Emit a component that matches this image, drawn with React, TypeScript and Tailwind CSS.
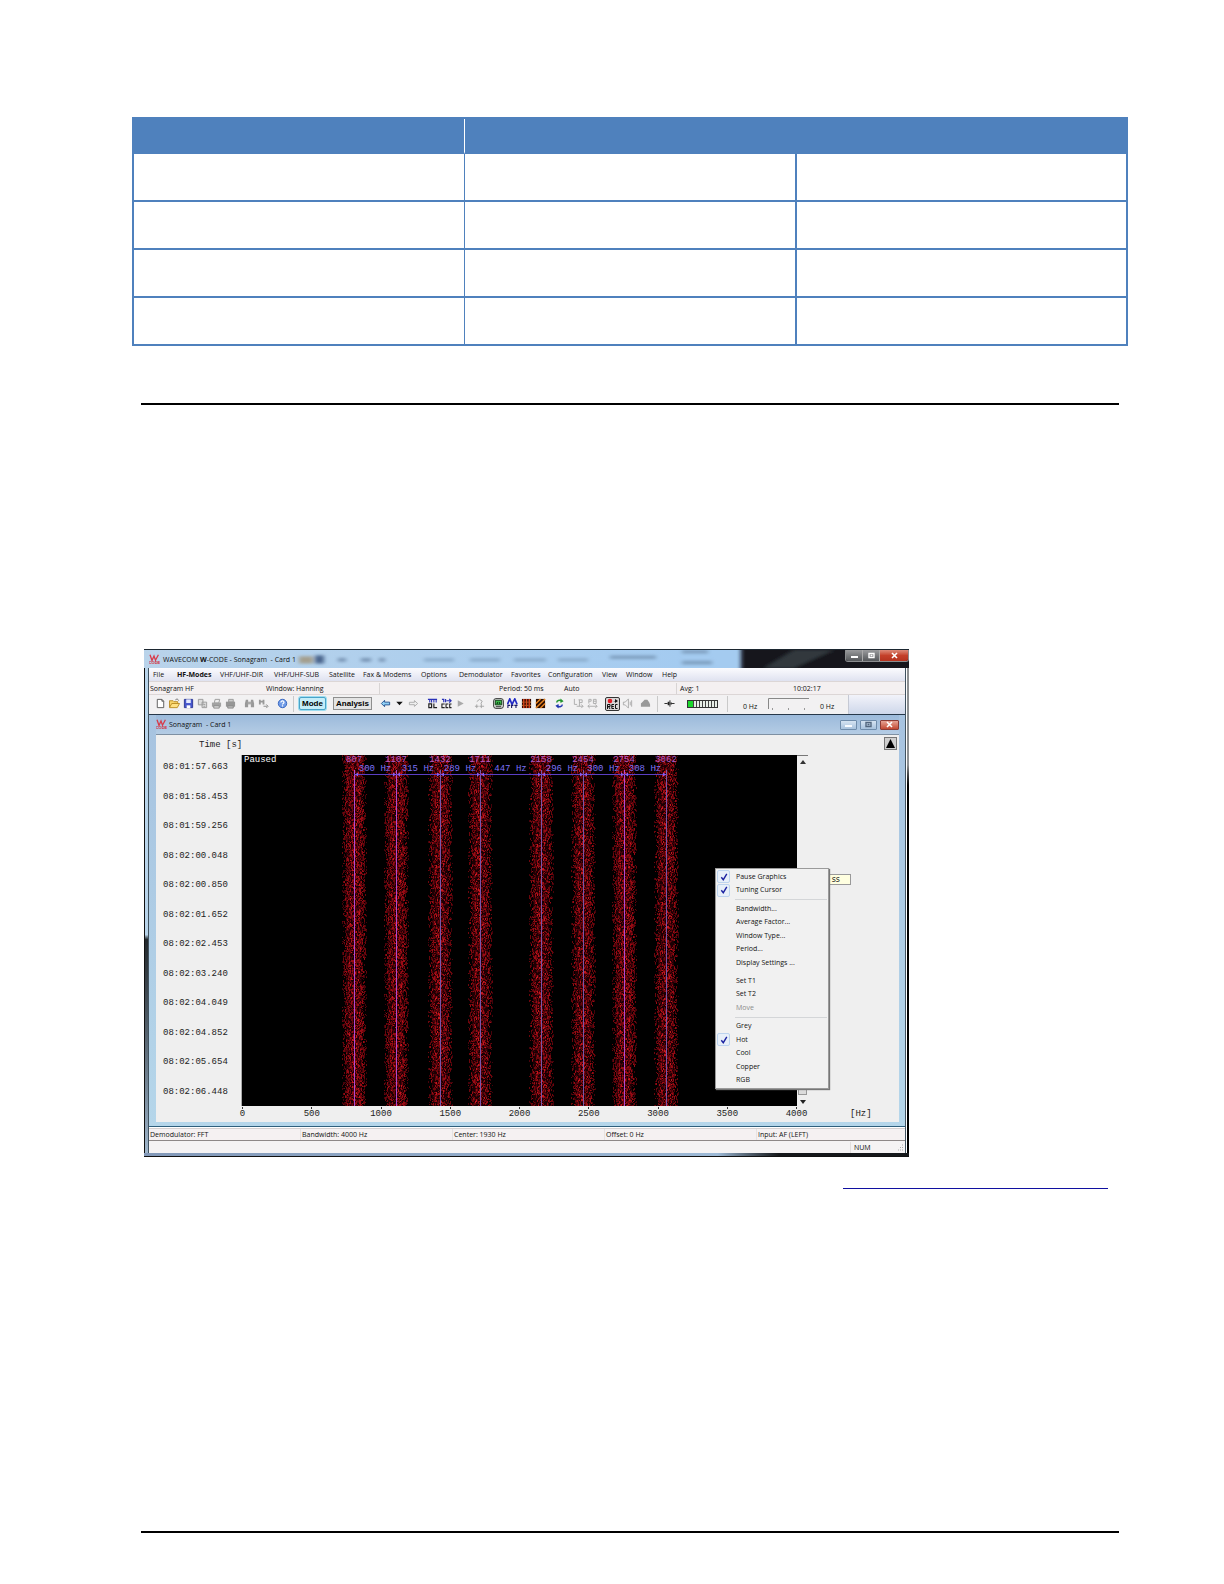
import React, { useMemo } from "react";

const bands = [
  { x: 112, freq: "807", hot: 1 },
  { x: 154, freq: "1107", hot: 1 },
  { x: 198, freq: "1432", hot: 0 },
  { x: 238, freq: "1711", hot: 0 },
  { x: 299, freq: "2158", hot: 0 },
  { x: 341, freq: "2454", hot: 0 },
  { x: 382, freq: "2754", hot: 1 },
  { x: 424, freq: "3062", hot: 0 },
];

const spans = ["300 Hz", "315 Hz", "289 Hz", "447 Hz", "296 Hz", "300 Hz", "308 Hz"];

const times = [
  "08:01:57.663", "08:01:58.453", "08:01:59.256", "08:02:00.048",
  "08:02:00.850", "08:02:01.652", "08:02:02.453", "08:02:03.240",
  "08:02:04.049", "08:02:04.852", "08:02:05.654", "08:02:06.448",
];

const axis = ["0", "500", "1000", "1500", "2000", "2500", "3000", "3500", "4000"];

const PLOT_W = 555;
const PLOT_H = 351;
const shades = ["#46020a", "#6c060c", "#980b14", "#c4161e"];

function buildNoise(): string[] {
  const paths: string[][] = [[], [], [], []];
  let seed = 71933;
  const rnd = () => {
    seed = (seed * 1103515245 + 12345) % 2147483648;
    return seed / 2147483648;
  };
  bands.forEach((b) => {
    for (let y = 0; y < PLOT_H; y += 1) {
      for (let dx = -13; dx <= 12; dx += 1) {
        const edge = 1 - Math.pow(Math.abs(dx) / 13, 3);
        const r = rnd();
        if (r > (b.hot ? 0.58 : 0.5) * edge) continue;
        const v = rnd() * (0.35 + 0.65 * edge);
        const shade = v < 0.34 ? 0 : v < 0.68 ? 1 : v < 0.92 ? 2 : 3;
        const tall = rnd() < 0.5;
        paths[shade].push(`M${b.x + dx} ${y}h1v${tall ? 2 : 1}h-1z`);
      }
    }
  });
  return paths.map((p) => p.join(""));
}

function Spectrogram() {
  const noise = useMemo(buildNoise, []);
  return (
    <svg viewBox={`0 0 ${PLOT_W} ${PLOT_H}`} className="block w-full bg-black font-['Liberation_Mono'] text-[9px]" role="img" aria-label="Sonagram">
      {bands.map((b) => (
        <rect key={b.x} x={b.x - 8} y="0" width="16" height={PLOT_H} fill="#1c0003" />
      ))}
      {noise.map((d, i) => (
        <path key={i} d={d} fill={shades[i]} shapeRendering="crispEdges" />
      ))}
      <text x="2" y="7" fill="#ffffff">Paused</text>
      {bands.map((b) => (
        <g key={b.x}>
          <rect x={b.x} y="15" width="1" height="336" fill={b.hot ? "#b04ad0" : "#7a55a8"} />
          <text x={b.x} y="7" textAnchor="middle" fill="#b25cc8">{b.freq}</text>
        </g>
      ))}
      <rect x="112" y="19" width="312" height="1" fill="#5b3fc4" />
      {bands.map((b, i) => (
        <g key={b.freq} fill="#8a5cf0">
          {i < 7 && <path d={`M${b.x + 1} 19.5l3-2v4z`} />}
          {i > 0 && <path d={`M${b.x} 19.5l-3-2v4z`} />}
        </g>
      ))}
      {spans.map((s, i) => (
        <text key={i} x={(bands[i].x + bands[i + 1].x) / 2} y="16" textAnchor="middle" fill="#7d72f8">{s}</text>
      ))}
    </svg>
  );
}

function Logo() {
  return (
    <svg viewBox="0 0 11 11" className="h-[11px] w-[11px] shrink-0" aria-hidden="true">
      <path d="M1 .8l2 5.600L5 2l1.500 4.200L9.400 .8" fill="none" stroke="#d83a48" strokeWidth="1.300" />
      <text x="5.5" y="10.4" textAnchor="middle" fill="#d02838" className="font-['Liberation_Sans'] text-[4px] font-bold">CODE</text>
    </svg>
  );
}

const icons: Record<string, React.ReactNode> = {
  New: <path d="M2.500 1.500h5l2 2v7h-7zM7.500 1.500v2h2" fill="#fff" stroke="#555" />,
  Open: <><path d="M.5 10V3h4l1 1h4v2" fill="#f8d46a" stroke="#b98a22" /><path d="M.5 10.500L3 6h8.500L9 10.500z" fill="#ffe184" stroke="#b98a22" /><path d="M7 2c2-1.500 3-.5 3.500.8" fill="none" stroke="#666" /></>,
  Save: <><path d="M1.500 1.500h9v9h-9z" fill="#4656cc" stroke="#2b3693" /><path d="M3.500 1.500h5v4h-5z" fill="#e4eaff" /><path d="M4 8h4v3H4z" fill="#fff" /></>,
  Copy: <path d="M1.500 1.500h5v6h-5zM5.500 4.500h5v6h-5zM7 7h2M7 9h2" fill="#ddd" stroke="#999" />,
  Print: <><path d="M4.500 1.500h5l-1 4h-5z" fill="#eee" stroke="#999" /><path d="M1 5h10v4.500H1z" fill="#a2a2a2" /><path d="M3 8.500h6V11H3z" fill="#ddd" stroke="#888" /></>,
  "Print preview": <><path d="M4 1.500h5v3H4z" fill="#ccc" stroke="#999" /><path d="M1 4h10v5.500H1z" fill="#969696" /><path d="M3 8.500h6V11H3z" fill="#bbb" stroke="#888" /></>,
  Find: <><path d="M2 2h2.500v8H1V6zM7.500 2H10l1 4v4H7.500z" fill="#999" /><path d="M4 4h4v3H4z" fill="#aaa" /></>,
  "Find next": <><path d="M1 2h2v5H1zM5 2h2v5H5zM2 3h4v2H2z" fill="#999" /><path d="M6 9h4M9 7l2 2-2 2" fill="none" stroke="#888" /></>,
  Help: <><circle cx="6" cy="6" r="4.600" fill="#6f9be8" stroke="#3564bd" /><path d="M4.300 4.800c0-2.300 3.500-2 3.300 0C7.500 6 6 6 6 7.200M6 8v1.200" fill="none" stroke="#fff" strokeWidth="1.300" /></>,
  Back: <path d="M1.500 6L5 2.500v2h5.500v3H5v2z" fill="#8fd0f5" stroke="#24508f" />,
  History: <path d="M2.500 4h7L6 8z" fill="#111" />,
  Forward: <path d="M10.500 6L7 2.800v1.900H1.500v2.600H7v1.900z" fill="#eee" stroke="#aaa" />,
  "Code online": <><path d="M1 1.500h10M3 1.500v3.500M5 5V2M7.500 2v3M10 1v4" fill="none" stroke="#2a31b8" strokeWidth="1.200" /><path d="M2 6.500h3v4H2zM7.500 6v4.500H11" fill="none" stroke="#222" strokeWidth="1.300" /></>,
  "Code check": <><path d="M1 1.500h2v3M5 1v3.500M6 3h5M9 1l2 2-2 2" fill="none" stroke="#2a31b8" strokeWidth="1.300" /><path d="M4 6.500H1v4h3M8 6.500H5.500v4H8M11.500 6.500h-2v4h2" fill="none" stroke="#222" strokeWidth="1.200" /></>,
  Play: <path d="M3 2.500v7L9.500 6z" fill="#aaa" />,
  Branch: <path d="M1 9h4M3 7v4M3 4l3-2.500 3 2L7.500 6M8 6v5M6 9h5" fill="none" stroke="#a3a3a3" />,
  Scope: <><rect x=".7" y=".7" width="10.600" height="10.600" rx="2.500" fill="#e8ece8" stroke="#222" /><path d="M2.500 2.500h7v5h-7z" fill="#3cb84a" stroke="#0d3413" /><path d="M4 6h1V4.500M7 4.500V6h1" fill="none" stroke="#062a0a" /><path d="M3 9.500h6" stroke="#222" /></>,
  FFT: <><path d="M.5 7L3 1l2.500 6L8.500 1l2.500 6" fill="none" stroke="#2129c4" strokeWidth="1.800" /><path d="M1 11V8h2.500M5 11V8h2M8 8h3.500M9.800 8v3" fill="none" stroke="#1a1a66" strokeWidth="1.200" /></>,
  Sonagram: <><path d="M1 1h10v10H1z" fill="#310300" /><path d="M3 1v10M6 1v10M9 1v10" stroke="#d8481c" strokeWidth="1.500" /><path d="M1 4.500h10M1 8h10" stroke="#f2b04a" strokeDasharray="1 2" /></>,
  Waterfall: <><path d="M1 1h10v10H1z" fill="#2a0c00" /><path d="M1 6l5-5M1 11L11 1M6 11l5-5" stroke="#e88420" strokeWidth="1.600" /></>,
  Refresh: <><path d="M3 5c0-2.500 3-3 5-2" fill="none" stroke="#22952e" strokeWidth="1.600" /><path d="M7 .5l3.500 3L7 5.500z" fill="#22952e" /><path d="M9 7c0 2.500-3 3-5 2" fill="none" stroke="#2236b0" strokeWidth="1.600" /><path d="M5 6.500L1.500 8.500l3.500 3z" fill="#2236b0" /></>,
  "Level scale": <path d="M1.500 1v6h3M6 2h4v3H7M7 2v7M4 9h7M9 7l2 2-2 2" fill="none" stroke="#ababab" />,
  "Pass band": <path d="M2 6V1.500h2.500v2H2M7 1.500h3V6H7zM7 3.500h3M1 9h10M3 7L1 9l2 2M9 7l2 2-2 2" fill="none" stroke="#ababab" />,
  Mute: <path d="M1.500 4.500h2L7 1v10L3.500 7.500h-2zM9 4v4M10.500 2.500v7" fill="none" stroke="#aaa" />,
  Cloud: <path d="M1 9.500V6l2-2 2-2h3l2 2.500L11 7v2.500z" fill="#999" />,
  Connect: <><path d="M.5 6H4M8 6h3.500M6.500 2.500v7" fill="none" stroke="#222" /><path d="M4 4h2v4H4zM7 5h1.500v2H7z" fill="#222" /></>,
};

function ToolIcon({ name }: { name: string }) {
  return (
    <button aria-label={name} className="flex h-[14px] w-[14px] shrink-0 items-center justify-center">
      <svg viewBox="0 0 12 12" className="h-[11px] w-[11px]" aria-hidden="true">{icons[name]}</svg>
    </button>
  );
}

function Tools({ names }: { names: string[] }) {
  return <div className="flex shrink-0">{names.map((n) => <ToolIcon key={n} name={n} />)}</div>;
}

function Divider() {
  return <div className="h-[16px] w-px shrink-0 bg-[#c9c9c9]" />;
}

function CaptionGlyph({ kind, color }: { kind: string; color: string }) {
  return (
    <svg viewBox="0 0 9 7" className="h-[7px] w-[9px]" aria-hidden="true">
      {kind === "Minimize" && <path d="M1 5h7" stroke={color} strokeWidth="2" />}
      {kind === "Maximize" && <path d="M2 1.500h5v4H2zM3.500 3.500h2" fill="none" stroke={color} strokeWidth="1.400" />}
      {kind === "Close" && <path d="M2 1l5 5M7 1L2 6" stroke={color} strokeWidth="1.600" />}
    </svg>
  );
}

const menuBar: [string, string][] = [
  ["File", "w-[24px]"],
  ["HF-Modes", "w-[43px] font-bold"],
  ["VHF/UHF-DIR", "w-[54px]"],
  ["VHF/UHF-SUB", "w-[55px]"],
  ["Satellite", "w-[34px]"],
  ["Fax & Modems", "w-[58px]"],
  ["Options", "w-[38px]"],
  ["Demodulator", "w-[52px]"],
  ["Favorites", "w-[37px]"],
  ["Configuration", "w-[54px]"],
  ["View", "w-[24px]"],
  ["Window", "w-[36px]"],
  ["Help", "w-[24px]"],
];

const menuGroups: { label: string; on?: boolean; off?: boolean }[][] = [
  [{ label: "Pause Graphics", on: true }, { label: "Tuning Cursor", on: true }],
  [{ label: "Bandwidth..." }, { label: "Average Factor..." }, { label: "Window Type..." }, { label: "Period..." }, { label: "Display Settings ..." }],
  [{ label: "Set T1" }, { label: "Set T2" }, { label: "Move", off: true }],
  [{ label: "Grey" }, { label: "Hot", on: true }, { label: "Cool" }, { label: "Copper" }, { label: "RGB" }],
];

function ContextMenu() {
  return (
    <div role="menu" className="absolute top-[113px] right-[70px] z-10 flex h-[221px] w-[114px] flex-col border border-[#9a9a9a] bg-[#f1f1f1] p-px font-['Open_Sans'] text-[7px] shadow-[1px_1px_1px_#777]">
      {menuGroups.map((group, g) => (
        <React.Fragment key={g}>
          {g > 0 && (
            <div className="flex h-[5px] shrink-0 items-center pl-[18px]">
              <div className={g === 2 ? "h-px w-full" : "h-px w-full bg-[#d4d6d8]"} />
            </div>
          )}
          {group.map((it) => (
            <button key={it.label} role="menuitem" disabled={it.off} className={`flex flex-1 items-center text-left leading-[12px] whitespace-nowrap ${it.off ? "text-[#8c8c8c]" : "text-[#111]"}`}>
              <span className={`mr-[6px] flex h-[13px] w-[13px] shrink-0 items-center justify-center rounded-[2px] border ${it.on ? "border-[#bcd3ee] bg-[#e7eff9]" : "border-transparent"}`}>
                {it.on && (
                  <svg viewBox="0 0 8 8" className="h-[8px] w-[8px]" aria-hidden="true">
                    <path d="M1.300 4.200l2 2.500L6.800.9" fill="none" stroke="#1c22a0" strokeWidth="1.400" />
                  </svg>
                )}
              </span>
              {it.label}
            </button>
          ))}
        </React.Fragment>
      ))}
    </div>
  );
}

function TitleBar() {
  return (
    <header className="relative flex h-[19px] items-start overflow-hidden border-t border-[#1c2730] bg-linear-to-r from-[#b9d3ea] from-0% via-[#a4cbf0] via-70% to-[#a4cbf0]">
      <svg viewBox="0 0 765 20" preserveAspectRatio="none" className="absolute inset-0 h-full w-full" aria-hidden="true">
        <defs>
          <filter id="soft" x="-20%" y="-50%" width="140%" height="200%"><feGaussianBlur stdDeviation="2" /></filter>
        </defs>
        <g filter="url(#soft)">
          <rect x="155" y="7" width="14" height="8" fill="#a49f8e" />
          <rect x="171" y="6" width="9" height="9" fill="#49658c" />
          <path d="M194 11h8M217 11h10M235 11h6" stroke="#7894b4" strokeWidth="4" />
          <path d="M280 11h30M326 11h30M370 11h32M414 11h30" stroke="#8fb0d0" strokeWidth="4" />
          <path d="M466 8h46M538 2h26M538 14h30" stroke="#7f9fbf" strokeWidth="4" />
          <path d="M597 -5H770V25H597z" fill="#14181c" />
          <path d="M620 20L650 0h40l-40 20z" fill="#30373c" />
        </g>
      </svg>
      <div className="relative flex w-full items-start pl-[5px]">
        <div className="flex h-[19px] items-center gap-[3px]">
          <Logo />
          <h1 className="text-[7px] leading-[12px] whitespace-pre text-[#111]">WAVECOM <b>W</b>-CODE - Sonagram  - Card 1</h1>
        </div>
        <div className="ml-auto flex h-[12px] overflow-hidden rounded-b-[3px] border border-t-0 border-[#8b8d8f]">
          <button aria-label="Minimize" className="flex w-[17px] items-center justify-center border-r border-[#aaa] bg-linear-to-b from-[#9b9c9e] to-[#55585b]"><CaptionGlyph kind="Minimize" color="#fff" /></button>
          <button aria-label="Maximize" className="flex w-[17px] items-center justify-center border-r border-[#aaa] bg-linear-to-b from-[#9b9c9e] to-[#55585b]"><CaptionGlyph kind="Maximize" color="#fff" /></button>
          <button aria-label="Close" className="flex w-[28px] items-center justify-center bg-linear-to-b from-[#dc8a78] via-[#c4402a] to-[#b5331f]"><CaptionGlyph kind="Close" color="#fff" /></button>
        </div>
      </div>
    </header>
  );
}

function ToolBar() {
  return (
    <div role="toolbar" className="flex h-[19px] overflow-hidden bg-[#f2f1f2]">
      <div className="flex flex-1 items-center pb-[2px] pl-[4px]">
        <Tools names={["New", "Open", "Save", "Copy", "Print", "Print preview"]} />
        <div className="ml-[5px]"><Tools names={["Find", "Find next"]} /></div>
        <div className="mr-[4px] ml-[5px]"><Tools names={["Help"]} /></div>
        <Divider />
        <button className="ml-[5px] h-[13px] w-[27px] shrink-0 rounded-[2px] border border-[#4aa3c8] bg-[#c5edf8] font-['Liberation_Sans'] text-[8px] leading-[11px] font-bold text-black ring-1 ring-[#9bdcf0]">Mode</button>
        <button className="mr-[6px] ml-[7px] h-[13px] w-[39px] shrink-0 border border-[#8f8f8f] bg-[#e4e4e4] font-['Liberation_Sans'] text-[8px] leading-[11px] font-bold text-black">Analysis</button>
        <Tools names={["Back", "History", "Forward"]} />
        <div className="ml-[5px]"><Tools names={["Code online", "Code check", "Play"]} /></div>
        <div className="ml-[5px]"><Tools names={["Branch"]} /></div>
        <div className="ml-[5px]"><Tools names={["Scope", "FFT", "Sonagram", "Waterfall"]} /></div>
        <div className="ml-[5px]"><Tools names={["Refresh"]} /></div>
        <div className="ml-[5px]"><Tools names={["Level scale", "Pass band"]} /></div>
        <button aria-label="Record" className="ml-[6px] h-[14px] w-[15px] shrink-0 rounded-[2px] border border-[#333] bg-[#d9d5d5]">
          <svg viewBox="0 0 13 12" className="h-[12px] w-[13px]" aria-hidden="true">
            <circle cx="4" cy="3" r="2.300" fill="#e01c24" />
            <path d="M7 3h2V1l3 2-3 2V3.500" fill="#111" />
            <path d="M1.500 11V6.500H4V8.500H1.500M2.500 8.500L4 11M8 6.500H5.800V10.500H8M5.800 8.500h2M11.500 6.500h-2v4h2" fill="none" stroke="#111" />
          </svg>
        </button>
        <Tools names={["Mute"]} />
        <div className="mr-[5px] ml-[4px]"><Tools names={["Cloud"]} /></div>
        <Divider />
        <div className="mr-[11px] ml-[4px]"><Tools names={["Connect"]} /></div>
        <svg viewBox="0 0 31 8" className="h-[8px] w-[31px] shrink-0" role="img" aria-label="Level">
          <rect x=".5" y=".5" width="30" height="7" fill="#e8efe8" stroke="#333" />
          <rect x="1" y="1" width="5" height="6" fill="#1bd82c" />
          <path d="M6.500 1v6M9.500 1v6M12.500 1v6M15.500 1v6M18.500 1v6M21.500 1v6M24.500 1v6M27.500 1v6" stroke="#444" />
        </svg>
        <div className="ml-[9px]"><Divider /></div>
        <span className="mt-[6px] ml-[15px] w-[25px] shrink-0 leading-[10px]">0 Hz</span>
        <svg viewBox="0 0 42 12" className="h-[12px] w-[42px] shrink-0" aria-hidden="true">
          <path d="M.5 11V.5H41" fill="none" stroke="#888" />
          <path d="M4.500 10v2M20.500 10v2M36.500 10v2" stroke="#999" />
        </svg>
        <span className="mt-[6px] ml-[10px] shrink-0 leading-[10px]">0 Hz</span>
      </div>
      <div className="h-full w-[57px] shrink-0 border-l border-[#c5c9d4] bg-linear-to-b from-[#f2f3fa] to-[#ced7ea]" />
    </div>
  );
}

function ChildWindow() {
  return (
    <section className="border-t border-b border-t-[#27384a] border-b-[#2f5f7c] bg-linear-to-b from-[#a7c3e0] to-[#b5d6ea] pr-[6px] pb-[4px] pl-[7px]">
      <header className="flex h-[19px] items-center bg-linear-to-b from-[#9cbadb] to-[#b4cce4]">
        <Logo />
        <h2 className="ml-[2px] text-[7px] leading-[12px] whitespace-pre text-[#111]">Sonagram  - Card 1</h2>
        <div className="ml-auto flex gap-[3px]">
          <button aria-label="Minimize" className="flex h-[10px] w-[17px] items-center justify-center rounded-[1px] border border-[#6f8cab] bg-linear-to-b from-[#d5e3f1] to-[#a8c2dd]"><CaptionGlyph kind="Minimize" color="#f8fbff" /></button>
          <button aria-label="Maximize" className="flex h-[10px] w-[17px] items-center justify-center rounded-[1px] border border-[#6f8cab] bg-linear-to-b from-[#d5e3f1] to-[#a8c2dd]"><CaptionGlyph kind="Maximize" color="#53677f" /></button>
          <button aria-label="Close" className="flex h-[10px] w-[19px] items-center justify-center rounded-[1px] border border-[#8c3b35] bg-linear-to-b from-[#e6a294] to-[#c24732]"><CaptionGlyph kind="Close" color="#fff" /></button>
        </div>
      </header>
      <div className="border-t border-[#7e90a2] bg-[#efefef] font-['Liberation_Mono'] text-[9px] leading-[9px] text-[#222]">
        <div className="flex h-[20px] items-center">
          <span className="ml-[43px] leading-[9px]">Time [s]</span>
          <button aria-label="Scroll up" className="mr-[2px] mb-[3px] ml-auto flex h-[13px] w-[13px] items-center justify-center border border-[#777] bg-[#cfcfcf]">
            <svg viewBox="0 0 11 11" className="h-[11px] w-[11px]" aria-hidden="true"><path d="M5.500 1L10 10H1z" fill="#000" /></svg>
          </button>
        </div>
        <div className="relative flex">
          <div className="flex w-[86px] shrink-0 flex-col justify-between border-r border-[#aaa] pt-[8px] pb-[9px] pl-[7px]">
            {times.map((t) => <span key={t}>{t}</span>)}
          </div>
          <div className="min-w-0 flex-1"><Spectrogram /></div>
          <div className="flex w-[11px] shrink-0 flex-col items-center border-t border-[#777] pt-[4px] pb-[2px]">
            <svg viewBox="0 0 6 4" className="h-[4px] w-[6px]" aria-hidden="true"><path d="M3 0l3 4H0z" fill="#333" /></svg>
            <div className="mt-auto mb-[5px] h-[6px] w-[9px] border border-[#999] bg-[#dcdcdc]" />
            <svg viewBox="0 0 6 4" className="h-[4px] w-[6px]" aria-hidden="true"><path d="M3 4L0 0h6z" fill="#222" /></svg>
          </div>
          <div className="w-[91px] shrink-0" />
          <div className="absolute top-[119px] right-[48px] h-[11px] w-[30px] border border-[#999] bg-[#ffffe0] pr-[10px] text-right font-['DejaVu_Sans'] text-[8px] leading-[9px]">ss</div>
          <ContextMenu />
        </div>
        <div className="flex h-[16px]">
          <div className="w-[86px] shrink-0" />
          <div className="flex min-w-0 flex-1 justify-between">
            {axis.map((a) => (
              <div key={a} className="flex w-px flex-col items-center pt-px">
                <div className="h-[2px] w-px bg-[#333]" />
                <span className="pt-px whitespace-nowrap">{a}</span>
              </div>
            ))}
          </div>
          <span className="w-[102px] shrink-0 pt-[4px] pl-[53px]">[Hz]</span>
        </div>
      </div>
    </section>
  );
}

function AppWindow() {
  return (
    <div className="w-full max-w-[765px] overflow-hidden bg-[#20262b] font-['Open_Sans'] text-[7px] text-[#111]">
      <TitleBar />
      <div className="flex">
        <div className="w-[4px] shrink-0 border-l border-[#111] bg-linear-to-b from-[#b8d4ea] from-55% via-[#22282c] via-56% to-[#9fb6cc]" />
        <div className="min-w-0 flex-1 border-x border-[#40525f] bg-white">
          <nav className="flex h-[13px] items-center overflow-hidden bg-linear-to-b from-[#fbfbfe] to-[#dfe2f0] pl-[4px]">
            {menuBar.map(([label, cls]) => (
              <button key={label} className={`shrink-0 text-left leading-[11px] whitespace-nowrap ${cls}`}>{label}</button>
            ))}
          </nav>
          <div className="flex h-[14px] items-center overflow-hidden border-y border-[#dcd6d6] bg-[#f4f0f1] leading-[11px] whitespace-nowrap">
            <span className="w-[116px] shrink-0 pl-px">Sonagram HF</span>
            <span className="w-[115px] shrink-0 border-r border-[#d8d4d4] pl-px">Window: Hanning</span>
            <span className="w-[184px] shrink-0 pl-[119px]">Period: 50 ms</span>
            <span className="w-[113px] shrink-0 border-r border-[#d8d4d4]">Auto</span>
            <span className="w-[116px] shrink-0 pl-[3px]">Avg: 1</span>
            <span>10:02:17</span>
          </div>
          <ToolBar />
          <ChildWindow />
          <div className="mt-px flex h-[13px] items-center overflow-hidden border-t border-b border-t-[#d5d0d0] border-b-[#8e8888] bg-[#f5f1f2] leading-[11px] whitespace-nowrap">
            {["Demodulator: FFT", "Bandwidth: 4000 Hz", "Center: 1930 Hz", "Offset: 0 Hz", "Input: AF (LEFT)"].map((s) => (
              <span key={s} className="w-[152px] shrink-0 border-r border-[#e6e2e2] pl-px">{s}</span>
            ))}
          </div>
          <div className="flex h-[12px] items-center justify-end bg-[#f5f3f4] leading-[11px]">
            <span className="w-[47px] border-l border-[#e2dede] pl-[3px]">NUM</span>
            <svg viewBox="0 0 8 8" className="mt-[2px] h-[8px] w-[8px]" aria-hidden="true"><path d="M5 1h1M3 3.500h1M5 3.500h1M1 6h1M3 6h1M5 6h1" stroke="#aaa" /></svg>
          </div>
        </div>
        <div className="w-[3px] shrink-0 border-l border-white bg-linear-to-b from-[#8d9092] from-20% to-black to-25%" />
      </div>
      <div className="h-[4px] border-b border-[#111] bg-linear-to-r from-[#8298b8] from-0% via-[#9db9d6] via-75% to-[#15181b] to-83%" />
    </div>
  );
}

const cell = "border-b-2 border-b-[#4f81bd]";

export default function App() {
  return (
    <main className="min-h-screen bg-white pt-[117px] pr-[96px] pb-[52px] pl-[132px]">
      <table className="w-full table-fixed border-separate border-spacing-0 border-2 border-[#4f81bd]" aria-label="Specifications">
        <colgroup>
          <col className="w-[331px]" />
          <col className="w-[332px]" />
          <col />
        </colgroup>
        <thead>
          <tr className="h-[35px] bg-[#4f81bd]">
            <th className="border-b-2 border-r border-r-white border-b-[#4f81bd]" />
            <th colSpan={2} />
          </tr>
        </thead>
        <tbody>
          {[0, 1, 2, 3].map((r) => (
            <tr key={r} className={r === 3 ? "h-[46px]" : "h-[48px]"}>
              <td className={`border-r border-r-[#4f81bd] ${r < 3 ? cell : ""}`} />
              <td className={`border-r-2 border-r-[#4f81bd] ${r < 3 ? cell : ""}`} />
              <td className={r < 3 ? cell : ""} />
            </tr>
          ))}
        </tbody>
      </table>
      <div className="mr-[9px] ml-[9px]">
        <hr className="mt-[57px] border-t-2 border-black" />
        <div className="mt-[244px] pl-[3px]"><AppWindow /></div>
        <div className="flex justify-end pt-[13px] pr-[11px]">
          <a href="#details" aria-label="Details" className="block h-[19px] w-[265px] border-b border-b-[#1010a0]" />
        </div>
        <hr className="mt-[342px] border-t-2 border-black" />
      </div>
    </main>
  );
}
